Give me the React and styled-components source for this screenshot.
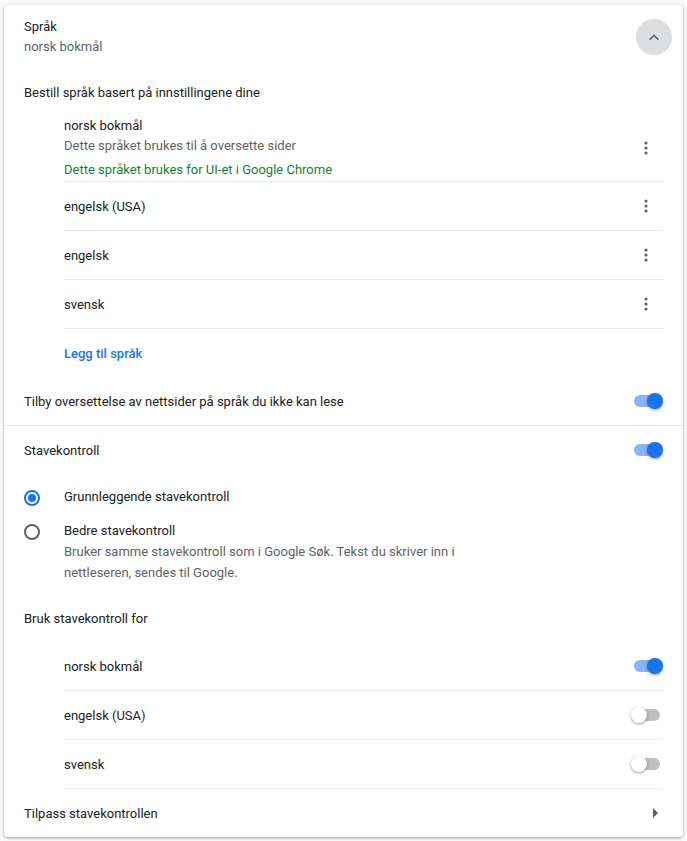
import React from 'react'
import styled, { createGlobalStyle } from 'styled-components'

const GlobalStyle = createGlobalStyle`
    body {
        margin: 0;
        background: #f8f9fa;
        font-family: Roboto, "Liberation Sans", Arial, sans-serif;
        font-size: 13px;
        color: #202124;
    }
`;

const Page = styled.div`
    padding: 5px 4px 4px 4px;
`;

const Card = styled.div`
    background: #fff;
    border-radius: 4px;
    box-shadow: 0 1px 2px 0 rgba(60, 64, 67, 0.3), 0 1px 3px 1px rgba(60, 64, 67, 0.15);
`;

const Header = styled.div`
    display: flex;
    align-items: center;
    justify-content: space-between;
    padding: 12px 11px 11px 20px;
`;

const HeaderText = styled.div`
    display: flex;
    flex-direction: column;
`;

const Primary = styled.div`
    color: #202124;
    line-height: 20px;
`;

const Secondary = styled.div`
    color: #5f6368;
    line-height: 20px;
`;

const Green = styled.div`
    color: #188038;
    line-height: 20px;
    margin-top: 4px;
`;

const CircleButton = styled.div`
    width: 36px;
    height: 36px;
    border-radius: 50%;
    background: #dddee0;
    display: flex;
    align-items: center;
    justify-content: center;
`;

const Heading = styled.div`
    padding: 0 20px;
    height: 48px;
    display: flex;
    align-items: center;
`;

const List = styled.div`
    margin: 0 20px 0 60px;
`;

const Row = styled.div`
    display: flex;
    align-items: center;
    justify-content: space-between;
    min-height: 48px;
    border-bottom: 1px solid #e8eaed;
    padding: ${p => p.tall ? '0 0 1px 0' : '0'};
`;

const RowText = styled.div`
    display: flex;
    flex-direction: column;
`;

const Dots = styled.div`
    width: 36px;
    display: flex;
    justify-content: center;
    margin-right: -1px;
`;

const AddLink = styled.div`
    color: #1a73e8;
    font-weight: 500;
    height: 48px;
    display: flex;
    align-items: center;
`;

const ToggleRow = styled.div`
    display: flex;
    align-items: center;
    justify-content: space-between;
    min-height: 48px;
    padding: 0 20px;
    border-bottom: ${p => p.divider ? '1px solid #e8eaed' : 'none'};
`;

const Track = styled.div`
    position: relative;
    width: 26px;
    height: 12px;
    border-radius: 6px;
    background: ${p => p.on ? '#8ab4f8' : '#bdc1c6'};
    margin-right: 3px;
`;

const Knob = styled.div`
    position: absolute;
    top: -2px;
    left: ${p => p.on ? '13px' : '-3px'};
    width: 16px;
    height: 16px;
    border-radius: 50%;
    background: ${p => p.on ? '#1a73e8' : '#fff'};
    box-shadow: 0 1px 3px 0 rgba(0, 0, 0, 0.4);
`;

const RadioGroup = styled.div`
    padding: 13px 20px 11px 20px;
    display: flex;
    flex-direction: column;
    gap: 14px;
`;

const RadioItem = styled.div`
    display: flex;
    align-items: flex-start;
`;

const RadioCircle = styled.div`
    width: 12px;
    height: 12px;
    border-radius: 50%;
    border: 2px solid ${p => p.checked ? '#1a73e8' : '#5f6368'};
    margin-top: 3px;
    display: flex;
    align-items: center;
    justify-content: center;
    flex-shrink: 0;
`;

const RadioDot = styled.div`
    width: 8px;
    height: 8px;
    border-radius: 50%;
    background: #1a73e8;
`;

const RadioLabel = styled.div`
    margin-left: 24px;
    display: flex;
    flex-direction: column;
    line-height: 20px;
`;

const Desc = styled.div`
    color: #5f6368;
    line-height: 21px;
    max-width: 420px;
`;

const Toggle = ({ on }) => (
  <Track on={on ? 1 : 0}>
    <Knob on={on ? 1 : 0} />
  </Track>
);

const MoreIcon = () => (
  <Dots>
    <svg width="4" height="14" viewBox="0 0 4 14">
      <circle cx="2" cy="2" r="1.6" fill="#5f6368" />
      <circle cx="2" cy="7" r="1.6" fill="#5f6368" />
      <circle cx="2" cy="12" r="1.6" fill="#5f6368" />
    </svg>
  </Dots>
);

const languages = ['engelsk (USA)', 'engelsk', 'svensk'];

const spellLangs = [
  { name: 'norsk bokmål', on: true },
  { name: 'engelsk (USA)', on: false },
  { name: 'svensk', on: false },
];

const App = () => {
  return (
    <Page>
      <GlobalStyle />
      <Card>
        <Header>
          <HeaderText>
            <Primary>Språk</Primary>
            <Secondary>norsk bokmål</Secondary>
          </HeaderText>
          <CircleButton>
            <svg width="10" height="7" viewBox="0 0 12 8">
              <path d="M1.4 7.4 6 2.8l4.6 4.6L12 6 6 0 0 6z" fill="#5f6368" />
            </svg>
          </CircleButton>
        </Header>

        <Heading>Bestill språk basert på innstillingene dine</Heading>

        <List>
          <Row tall>
            <RowText>
              <Primary>norsk bokmål</Primary>
              <Secondary>Dette språket brukes til å oversette sider</Secondary>
              <Green>Dette språket brukes for UI-et i Google Chrome</Green>
            </RowText>
            <MoreIcon />
          </Row>
          {languages.map(l => (
            <Row key={l}>
              <span>{l}</span>
              <MoreIcon />
            </Row>
          ))}
          <AddLink>Legg til språk</AddLink>
        </List>

        <ToggleRow divider>
          <span>Tilby oversettelse av nettsider på språk du ikke kan lese</span>
          <Toggle on />
        </ToggleRow>

        <ToggleRow>
          <span>Stavekontroll</span>
          <Toggle on />
        </ToggleRow>

        <RadioGroup>
          <RadioItem>
            <RadioCircle checked>
              <RadioDot />
            </RadioCircle>
            <RadioLabel>
              <span>Grunnleggende stavekontroll</span>
            </RadioLabel>
          </RadioItem>
          <RadioItem>
            <RadioCircle />
            <RadioLabel>
              <span>Bedre stavekontroll</span>
              <Desc>Bruker samme stavekontroll som i Google Søk. Tekst du skriver inn i nettleseren, sendes til Google.</Desc>
            </RadioLabel>
          </RadioItem>
        </RadioGroup>

        <Heading>Bruk stavekontroll for</Heading>

        <List>
          {spellLangs.map(l => (
            <Row key={l.name}>
              <span>{l.name}</span>
              <Toggle on={l.on} />
            </Row>
          ))}
        </List>

        <ToggleRow>
          <span>Tilpass stavekontrollen</span>
          <svg width="24" height="10" viewBox="0 0 24 10" style={{ marginRight: '-4px' }}>
            <path d="M10 0l5 5-5 5z" fill="#5f6368" />
          </svg>
        </ToggleRow>
      </Card>
    </Page>
  );
};

export default App
